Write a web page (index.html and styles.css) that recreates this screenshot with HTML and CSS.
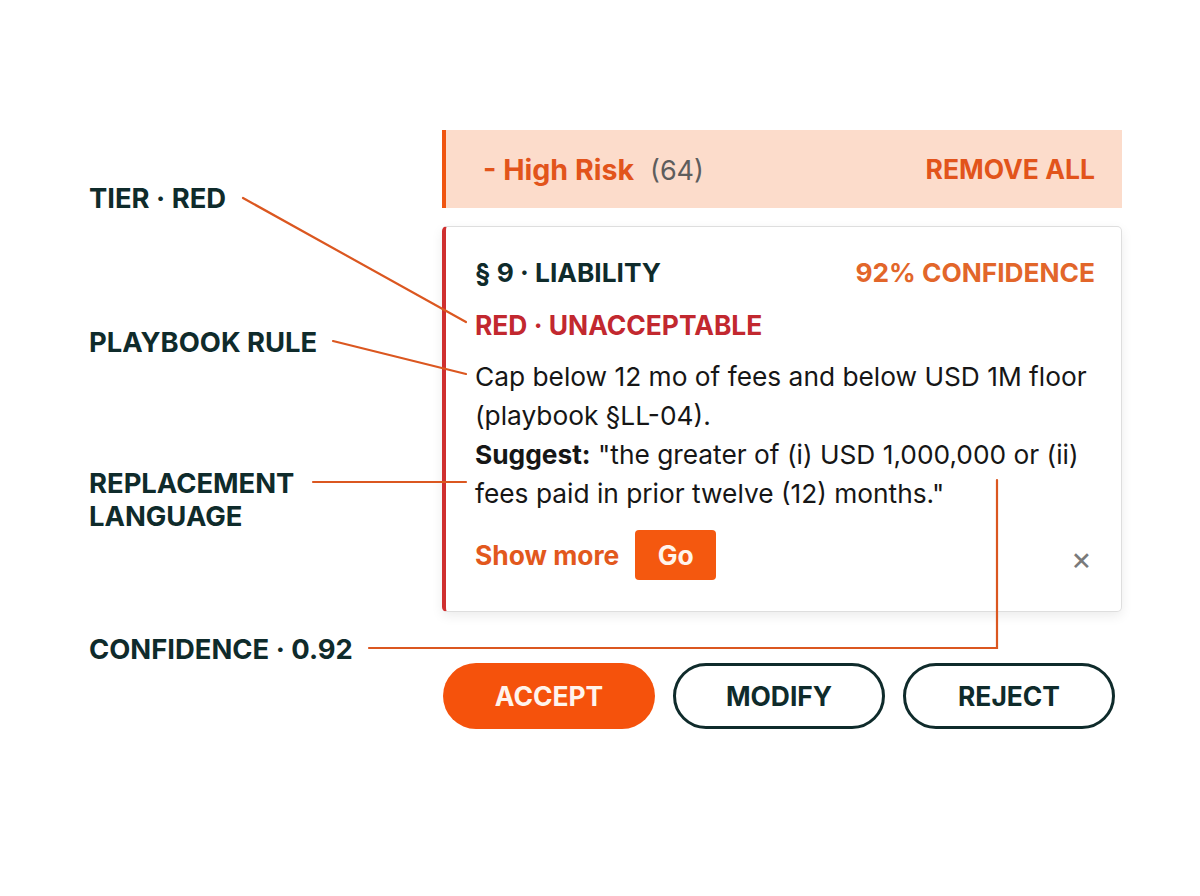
FILE: index.html
```html
<!DOCTYPE html>
<html lang="en">
<head>
<meta charset="utf-8">
<title>Clause review</title>
<link rel="stylesheet" href="styles.css">
</head>
<body>
<div class="stage">
  <div class="labels">
    <div class="label label-tier">TIER · RED</div>
    <div class="label label-rule">PLAYBOOK RULE</div>
    <div class="label label-repl">REPLACEMENT<br>LANGUAGE</div>
    <div class="label label-conf">CONFIDENCE · 0.92</div>
  </div>
  <div class="panel">
    <div class="banner">
      <div class="banner-title"><span class="banner-name">- High Risk</span><span class="banner-count">(64)</span></div>
      <div class="banner-action">REMOVE ALL</div>
    </div>
    <div class="card">
      <div class="card-head">
        <span class="clause">§ 9 · LIABILITY</span>
        <span class="confidence">92% CONFIDENCE</span>
      </div>
      <div class="tier">RED · UNACCEPTABLE</div>
      <p class="body">Cap below 12 mo of fees and below USD 1M floor (playbook §LL-04).<br><strong>Suggest:</strong> "the greater of (i) USD 1,000,000 or (ii) fees paid in prior twelve (12) months."</p>
      <div class="card-foot">
        <span class="show-more">Show more</span>
        <span class="go">Go</span>
        <span class="close">×</span>
      </div>
    </div>
    <div class="actions">
      <div class="btn btn-accept">ACCEPT</div>
      <div class="btn btn-outline">MODIFY</div>
      <div class="btn btn-outline">REJECT</div>
    </div>
  </div>
  <svg class="leaders" width="1200" height="896" viewBox="0 0 1200 896">
    <g fill="none" stroke="#db5720" stroke-width="2.2" stroke-linecap="round">
      <line x1="243" y1="198" x2="466" y2="322"/>
      <line x1="333" y1="341" x2="466" y2="374"/>
      <line x1="313" y1="482" x2="466" y2="482"/>
      <polyline points="369,648 997,648 997,480"/>
    </g>
  </svg>
</div>
</body>
</html>
```

FILE: styles.css
```css
* { box-sizing: border-box; }
html, body { margin: 0; padding: 0; background: #ffffff; }
body {
  font-family: Inter, "Noto Sans", "DejaVu Sans", sans-serif;
  width: 1200px;
  height: 896px;
  overflow: hidden;
}
.stage {
  position: relative;
  width: 1200px;
  height: 896px;
  display: grid;
  grid-template-columns: 442px 680px;
  padding-top: 130px;
}
.labels {
  display: flex;
  flex-direction: column;
  padding-left: 89px;
}
.label {
  font-size: 27.4px;
  line-height: 33px;
  font-weight: 700;
  color: #0f2b2b;
}
.label-tier { margin-top: 52px; }
.label-rule { margin-top: 111px; }
.label-repl { margin-top: 108px; }
.label-conf { margin-top: 100px; }

.panel { display: flex; flex-direction: column; }
.banner {
  height: 78px;
  background: #fcdccb;
  border-left: 4px solid #f05510;
  display: flex;
  align-items: center;
  justify-content: space-between;
  padding: 0 27px 0 37px;
}
.banner-name {
  font-size: 28.6px;
  font-weight: 700;
  color: #e2541b;
}
.banner-count {
  font-size: 27px;
  color: #5d5d5d;
  margin-left: 16px;
}
.banner-action {
  font-size: 26.5px;
  font-weight: 700;
  color: #e2541b;
}
.card {
  margin-top: 18px;
  height: 386px;
  background: #ffffff;
  border: 1px solid #dedede;
  border-left: 4px solid #cf2f2f;
  border-radius: 5px;
  box-shadow: 0 4px 12px rgba(0, 0, 0, 0.08);
  padding: 31px 20px 0 29px;
}
.card-head {
  display: flex;
  justify-content: space-between;
  line-height: 30px;
  font-size: 26.3px;
  font-weight: 700;
  margin-right: 6px;
}
.clause { color: #0f2b2b; }
.confidence { color: #e2662a; }
.tier {
  margin-top: 22px;
  line-height: 30px;
  font-size: 26.4px;
  font-weight: 700;
  color: #c2282f;
}
.body {
  margin: 17px 0 0 0;
  font-size: 26.3px;
  line-height: 39px;
  color: #161616;
}
.body strong { font-weight: 700; }
.card-foot {
  margin-top: 17px;
  height: 50px;
  display: flex;
  align-items: center;
}
.show-more {
  font-size: 26.4px;
  font-weight: 700;
  color: #e2581d;
}
.go {
  margin-left: 16px;
  width: 81px;
  height: 50px;
  background: #f4580f;
  color: #fff4ec;
  border-radius: 4px;
  font-size: 26.4px;
  font-weight: 700;
  display: flex;
  align-items: center;
  justify-content: center;
}
.close {
  margin-left: auto;
  margin-right: 9px;
  margin-top: 8px;
  font-size: 32px;
  color: #7a7a7a;
  line-height: 1;
}
.actions {
  margin-top: 51px;
  display: flex;
  gap: 18px;
  padding-left: 1px;
}
.btn {
  width: 212px;
  height: 66px;
  border-radius: 33px;
  display: flex;
  align-items: center;
  justify-content: center;
  font-size: 26.4px;
  font-weight: 700;
}
.btn-accept {
  background: #f5520c;
  color: #fff4ec;
}
.btn-outline {
  border: 3px solid #0f2b2b;
  color: #0f2b2b;
  background: #ffffff;
}
.leaders {
  position: absolute;
  left: 0;
  top: 0;
  pointer-events: none;
}
```
